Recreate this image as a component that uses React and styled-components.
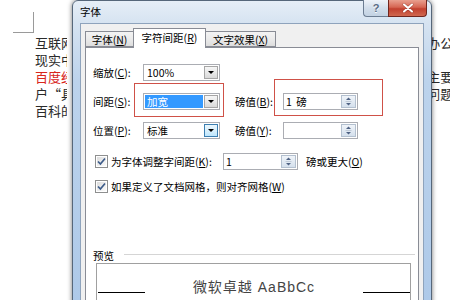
import React from 'react'
import styled, { createGlobalStyle } from 'styled-components'

const GlobalStyle = createGlobalStyle`
  html, body { margin: 0; padding: 0; background: #fff; }
  body { font-family: "Noto Sans CJK SC", "Noto Sans", sans-serif; }
`

const Page = styled.div`
  position: relative;
  width: 450px;
  height: 300px;
  overflow: hidden;
  background: #fff;
`

/* ---------- document behind the dialog ---------- */

const Doc = styled.div`
  padding: 12px 0 0 13px;
`

const CropMark = styled.div`
  width: 20px;
  height: 20px;
  border-right: 1px solid #9a9a9a;
  border-bottom: 1px solid #9a9a9a;
`

const Columns = styled.div`
  display: flex;
  margin: 1px 0 0 22px;
`

const DocColumn = styled.div`
  width: ${props => props.$w ? props.$w + 'px' : 'auto'};
  margin-left: ${props => props.$ml || 0}px;
  overflow: hidden;
  white-space: nowrap;
`

const DocLine = styled.div`
  font-size: 13px;
  line-height: 17px;
  height: 17px;
  color: ${props => props.$red ? '#d8261c' : '#2a2a2a'};
`

/* ---------- dialog frame ---------- */

const Window = styled.div`
  position: absolute;
  left: 72px;
  top: 0;
  width: 360px;
  height: 330px;
  box-sizing: border-box;
  display: flex;
  flex-direction: column;
  padding: 0 7px;
  border: 1px solid #56677a;
  border-radius: 6px 6px 0 0;
  background: linear-gradient(to bottom, #e6eef7 0, #d6e3f1 22px, #bcd3ec 80px, #acc8e8 100%);
  box-shadow: 0 0 5px rgba(0, 0, 0, 0.55);
`

const TitleBar = styled.div`
  display: flex;
  align-items: flex-start;
  height: 22px;
  flex-shrink: 0;
`

const Title = styled.span`
  font-size: 10.5px;
  line-height: 22px;
  color: #000;
`

const Captions = styled.div`
  display: flex;
  margin: -1px -3px 0 auto;
`

const HelpButton = styled.div`
  width: 25px;
  height: 17px;
  box-sizing: border-box;
  display: flex;
  align-items: center;
  justify-content: center;
  border: 1px solid #6c7d92;
  border-top: none;
  border-right: none;
  border-radius: 0 0 0 4px;
  background: linear-gradient(to bottom, #eef3f9, #d2deeb 50%, #c3d2e3);
  color: #566a84;
  font: bold 11px "Liberation Sans", sans-serif;
  text-shadow: 0 1px 0 #fff;
`

const CloseButton = styled.div`
  width: 39px;
  height: 17px;
  box-sizing: border-box;
  display: flex;
  align-items: center;
  justify-content: center;
  border: 1px solid #70261e;
  border-top: none;
  border-radius: 0 0 4px 0;
  background: linear-gradient(to bottom, #e9a08f, #d66653 45%, #c2402f 55%, #d0684f);
`

const Client = styled.div`
  flex: 1;
  display: flex;
  flex-direction: column;
  background: #f0f0f0;
  border: 1px solid #8ea3bc;
  border-bottom: none;
  padding: 4px 4px 0 4px;
`

/* ---------- tabs ---------- */

const TabStrip = styled.div`
  display: flex;
  align-items: flex-end;
  height: 19px;
`

const Tab = styled.div`
  position: relative;
  z-index: ${props => props.$active ? 2 : 1};
  width: ${props => props.$w}px;
  height: ${props => props.$active ? 20 : 16}px;
  margin-bottom: ${props => props.$active ? -1 : 0}px;
  margin-left: ${props => props.$first ? 0 : -1}px;
  box-sizing: border-box;
  display: flex;
  align-items: center;
  justify-content: center;
  border: 1px solid #898c95;
  border-bottom: ${props => props.$active ? 'none' : '1px solid #898c95'};
  background: ${props => props.$active ? '#fff' : 'linear-gradient(to bottom, #f3f3f3, #ebebeb 50%, #dddddd)'};
  font-size: 10.5px;
  color: #000;
  padding-bottom: ${props => props.$active ? 2 : 0}px;
`

const Panel = styled.div`
  flex: 1;
  background: #fff;
  border: 1px solid #898c95;
  border-bottom: none;
  padding: 16px 0 0 7px;
  display: flex;
  flex-direction: column;
`

/* ---------- form parts ---------- */

const FieldRow = styled.div`
  display: flex;
  align-items: center;
  height: 17px;
  margin-top: ${props => props.$mt || 0}px;
  font-size: 10.5px;
  color: #000;
`

const FieldLabel = styled.span`
  width: ${props => props.$w || 50}px;
  margin-left: ${props => props.$ml || 0}px;
  flex-shrink: 0;
  white-space: nowrap;
`

const Combo = styled.div`
  width: 77px;
  height: 17px;
  box-sizing: border-box;
  display: flex;
  padding: 1px;
  border: 1px solid #abadb3;
  background: #fff;
`

const ComboText = styled.span`
  flex: 1;
  padding-left: 2px;
  margin-right: 1px;
  font-size: 10.5px;
  line-height: 13px;
  background: ${props => props.$selected ? '#3399ff' : 'transparent'};
  color: ${props => props.$selected ? '#fff' : '#000'};
`

const DropButton = styled.span`
  width: 14px;
  height: 13px;
  box-sizing: border-box;
  display: flex;
  align-items: center;
  justify-content: center;
  border: 1px solid ${props => props.$hot ? '#3c7fb1' : '#a6a6a6'};
  background: ${props => props.$hot
    ? 'linear-gradient(to bottom, #eaf6fd, #d9f0fc 50%, #bee6fd)'
    : 'linear-gradient(to bottom, #f6f6f6, #e9e9e9 50%, #d9d9d9)'};
`

const Triangle = styled.span`
  width: 0;
  height: 0;
  border-left: 3px solid transparent;
  border-right: 3px solid transparent;
  border-top: 3px solid #000;
`

const SpinBox = styled.div`
  width: 75px;
  height: 17px;
  box-sizing: border-box;
  display: flex;
  align-items: center;
  padding: 0 1px 0 2px;
  border: 1px solid #abadb3;
  background: #fff;
`

const SpinText = styled.span`
  flex: 1;
  font-size: 10.5px;
  line-height: 13px;
  word-spacing: 2px;
`

const SpinButton = styled.span`
  display: flex;
`

const Trailing = styled.span`
  margin-left: 8px;
  white-space: nowrap;
`

const CheckRow = styled(FieldRow)`
  padding-left: 2px;
`

const CheckText = styled.span`
  margin-left: 3px;
  width: ${props => props.$w ? props.$w + 'px' : 'auto'};
  flex-shrink: 0;
  white-space: nowrap;
`

/* ---------- preview ---------- */

const PreviewHeader = styled.div`
  display: flex;
  align-items: center;
  margin-top: 54px;
  height: 12px;
  font-size: 10.5px;
`

const Rule = styled.div`
  flex: 1;
  margin: 0 3px 0 10px;
  border-top: 1px solid #d5d5d5;
  border-bottom: 1px solid #fff;
`

const PreviewBox = styled.div`
  width: 315px;
  height: 60px;
  box-sizing: border-box;
  margin: 2px 0 0 3px;
  border: 1px solid #a0a0a0;
  padding: 16px 0 0 1px;
  display: flex;
  align-items: flex-start;
  justify-content: space-between;
`

const BaseLine = styled.div`
  width: 47px;
  height: 1px;
  margin-top: 12px;
  background: #000;
`

const Sample = styled.span`
  font-family: "Liberation Sans", "Noto Sans CJK SC", sans-serif;
  font-size: 14px;
  line-height: 14px;
  letter-spacing: 1px;
  color: #444;
`

/* ---------- annotation overlay ---------- */

const Highlight = styled.div`
  position: absolute;
  left: ${props => props.$x}px;
  top: ${props => props.$y}px;
  width: ${props => props.$w}px;
  height: ${props => props.$h}px;
  border: 1px solid #cf5148;
  pointer-events: none;
`

const Key = ({ children }) => <u>{children}</u>

const Drop = ({ hot }) => (
  <DropButton $hot={hot}><Triangle /></DropButton>
)

const Spinner = () => (
  <SpinButton>
    <svg width="15" height="13" viewBox="0 0 15 13">
      <defs>
        <linearGradient id="spg" x1="0" y1="0" x2="0" y2="1">
          <stop offset="0" stopColor="#f1f5fa" />
          <stop offset="1" stopColor="#d3dfec" />
        </linearGradient>
      </defs>
      <rect x="0.5" y="0.5" width="14" height="12" fill="url(#spg)" stroke="#b3c0cf" />
      <path d="M7.5 2.5 L5 5 L10 5 Z" fill="#4f6284" />
      <path d="M4.5 6.5 H10.5" stroke="#c0cbd8" strokeWidth="1" />
      <path d="M5 8 L10 8 L7.5 10.5 Z" fill="#4f6284" />
    </svg>
  </SpinButton>
)

const Checkbox = () => (
  <svg width="13" height="13" viewBox="0 0 13 13">
    <defs>
      <linearGradient id="cbg" x1="0" y1="0" x2="1" y2="1">
        <stop offset="0" stopColor="#dcdcdc" />
        <stop offset="1" stopColor="#fbfbfb" />
      </linearGradient>
    </defs>
    <rect x="0.5" y="0.5" width="12" height="12" fill="#fff" stroke="#8e8f8f" />
    <rect x="2" y="2" width="9" height="9" fill="url(#cbg)" />
    <path d="M3 6.5 L5.4 9 L10 3.5" fill="none" stroke="#3d5c8a" strokeWidth="1.7" />
  </svg>
)

// only the parts of the page text that peek out beside the dialog
const leftLines = [
  { text: '互联网' },
  { text: '现实中' },
  { text: '百度经', red: true },
  { text: '户“具体' },
  { text: '百科的' },
]

const rightLines = ['办公', '，', '主要', '问题', '']

export default function App() {
  return (
    <Page>
      <GlobalStyle />
      <Doc>
        <CropMark />
        <Columns>
          <DocColumn $w={37}>
            {leftLines.map((l, i) => (
              <DocLine key={i} $red={l.red}>{l.text}</DocLine>
            ))}
          </DocColumn>
          <DocColumn $ml={360}>
            {rightLines.map((t, i) => (
              <DocLine key={i}>{t}</DocLine>
            ))}
          </DocColumn>
        </Columns>
      </Doc>

      <Window>
        <TitleBar>
          <Title>字体</Title>
          <Captions>
            <HelpButton>?</HelpButton>
            <CloseButton>
              <svg width="12" height="10" viewBox="0 0 12 10">
                <path d="M2 1.5 L10 8.5 M10 1.5 L2 8.5" stroke="#5a1a12" strokeWidth="3" strokeLinecap="round" opacity="0.35" />
                <path d="M2 1.5 L10 8.5 M10 1.5 L2 8.5" stroke="#fff" strokeWidth="2" strokeLinecap="round" />
              </svg>
            </CloseButton>
          </Captions>
        </TitleBar>

        <Client>
          <TabStrip>
            <Tab $w={49} $first>字体(<Key>N</Key>)</Tab>
            <Tab $w={73} $active>字符间距(<Key>R</Key>)</Tab>
            <Tab $w={71}>文字效果(<Key>X</Key>)</Tab>
          </TabStrip>

          <Panel>
            <FieldRow>
              <FieldLabel>缩放(<Key>C</Key>):</FieldLabel>
              <Combo><ComboText>100%</ComboText><Drop /></Combo>
            </FieldRow>

            <FieldRow $mt={12}>
              <FieldLabel>间距(<Key>S</Key>):</FieldLabel>
              <Combo><ComboText $selected>加宽</ComboText><Drop /></Combo>
              <FieldLabel $ml={15} $w={48}>磅值(<Key>B</Key>):</FieldLabel>
              <SpinBox><SpinText>1 磅</SpinText><Spinner /></SpinBox>
            </FieldRow>

            <FieldRow $mt={12}>
              <FieldLabel>位置(<Key>P</Key>):</FieldLabel>
              <Combo><ComboText>标准</ComboText><Drop hot /></Combo>
              <FieldLabel $ml={15} $w={48}>磅值(<Key>Y</Key>):</FieldLabel>
              <SpinBox><SpinText /><Spinner /></SpinBox>
            </FieldRow>

            <CheckRow $mt={14}>
              <Checkbox />
              <CheckText $w={112}>为字体调整字间距(<Key>K</Key>):</CheckText>
              <SpinBox><SpinText>1</SpinText><Spinner /></SpinBox>
              <Trailing>磅或更大(<Key>O</Key>)</Trailing>
            </CheckRow>

            <CheckRow $mt={8}>
              <Checkbox />
              <CheckText>如果定义了文档网格，则对齐网格(<Key>W</Key>)</CheckText>
            </CheckRow>

            <PreviewHeader>
              <span>预览</span>
              <Rule />
            </PreviewHeader>

            <PreviewBox>
              <BaseLine />
              <Sample>微软卓越 AaBbCc</Sample>
              <BaseLine />
            </PreviewBox>
          </Panel>
        </Client>
      </Window>

      <Highlight $x={134} $y={83} $w={88} $h={32} />
      <Highlight $x={274} $y={79} $w={107} $h={35} />
    </Page>
  )
}
